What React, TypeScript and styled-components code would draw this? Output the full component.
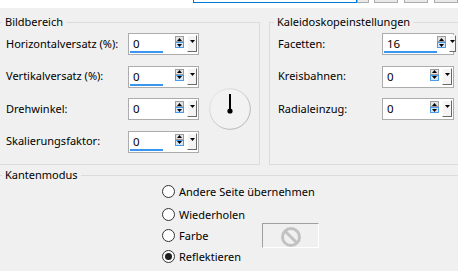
import React from 'react';
import styled, { createGlobalStyle } from 'styled-components';

const GlobalStyle = createGlobalStyle`
    html, body {
        margin: 0;
        padding: 0;
        background: #f0f0f0;
    }
    body {
        font-family: 'Noto Sans', 'Segoe UI', sans-serif;
        font-size: 11px;
        color: #000;
    }
`;

const Window = styled.div`
    width: 458px;
    height: 271px;
    overflow: hidden;
    background: #f0f0f0;
`;

const TopStrip = styled.div`
    height: 8px;
    background: #fff;
    display: flex;
    align-items: flex-start;
`;

const SearchField = styled.div`
    margin-left: 193px;
    width: 170px;
    height: 3px;
    box-sizing: border-box;
    border: 1px solid #0078d7;
    border-top: none;
    background: #fff;
`;

const StripButton = styled.div<{ $w: number; $gap: number }>`
    margin-left: ${(p) => p.$gap}px;
    width: ${(p) => p.$w}px;
    height: 3px;
    box-sizing: border-box;
    border: 1px solid #adadad;
    border-top: none;
    background: #e9e9e9;
    flex: none;
`;

const UpperRow = styled.div`
    display: flex;
    margin-top: 14px;
`;

const Group = styled.section<{ $w: number; $h: number; $open?: boolean }>`
    flex: none;
    width: ${(p) => p.$w}px;
    height: ${(p) => p.$h}px;
    box-sizing: border-box;
    border: 1px solid #dcdcdc;
    border-left: ${(p) => (p.$open ? 'none' : '1px solid #dcdcdc')};
    & + & {
        margin-left: 9px;
    }
`;

const EdgeGroup = styled.section`
    margin-top: 10px;
    border-top: 1px solid #dcdcdc;
`;

const Legend = styled.div<{ $x: number }>`
    width: fit-content;
    margin: -9px 0 0 ${(p) => p.$x}px;
    padding: 0 3px;
    line-height: 16px;
    background: #f0f0f0;
`;

const FieldGrid = styled.div<{ $label: number; $box: number; $pad: number }>`
    display: grid;
    grid-template-columns: ${(p) => p.$label}px ${(p) => p.$box}px auto;
    grid-auto-rows: 22px;
    row-gap: 10.67px;
    align-items: center;
    margin-top: 3px;
    padding-left: ${(p) => p.$pad}px;
`;

const Label = styled.div`
    grid-column: 1;
    margin-bottom: 2px;
    white-space: nowrap;
`;

const Box = styled.div`
    grid-column: 2;
    height: 22px;
    box-sizing: border-box;
    border: 1px solid #acacac;
    background: #fff;
    display: flex;
    align-items: flex-start;
`;

const ValueCell = styled.div`
    flex: 1;
    height: 100%;
    display: flex;
    flex-direction: column;
`;

const ValueText = styled.div`
    padding: 2px 0 0 4px;
    line-height: 15px;
    font-size: 11.5px;
`;

const Bar = styled.div`
    margin: auto 0 1px 1px;
    height: 3px;
    background: #3a95ef;
`;

const Spinner = styled.div`
    display: flex;
    flex-direction: column;
    margin-top: 2px;
`;

const Step = styled.div<{ $hot?: boolean }>`
    width: 9px;
    height: 6px;
    box-sizing: border-box;
    border: 1px solid ${(p) => (p.$hot ? '#4c9ae4' : '#9d9d9d')};
    background: ${(p) => (p.$hot ? '#d4e8fa' : '#e4e4e4')};
    display: flex;
    align-items: center;
    justify-content: center;
`;

const DropButton = styled.div`
    width: 10px;
    height: 17px;
    margin: 1px 1px 0 3px;
    box-sizing: border-box;
    border-top: 1px solid #fff;
    border-left: 1px solid #fff;
    border-right: 1px solid #6a6a6a;
    border-bottom: 1px solid #6a6a6a;
    background: #f4f4f4;
    display: flex;
    justify-content: center;
    padding-top: 4px;
`;

const Dial = styled.svg`
    grid-column: 3;
    grid-row: 3;
    margin-left: 10px;
    width: 42px;
    height: 42px;
    align-self: center;
`;

const RadioGrid = styled.div`
    display: grid;
    grid-template-columns: 100px auto;
    grid-template-rows: 24px 22px 21px 21px;
    align-items: center;
    margin: -4px 0 0 162px;
`;

const RadioRow = styled.label<{ $wide?: boolean }>`
    grid-column: ${(p) => (p.$wide ? '1 / -1' : '1')};
    display: flex;
    align-items: center;
    gap: 4px;
    white-space: nowrap;
`;

const RadioDot = styled.span<{ $on?: boolean }>`
    width: 13px;
    height: 13px;
    flex: none;
    box-sizing: border-box;
    border-radius: 50%;
    border: 1px solid #333;
    background: #fff;
    display: flex;
    align-items: center;
    justify-content: center;
    &::after {
        content: '';
        width: 7px;
        height: 7px;
        border-radius: 50%;
        background: ${(p) => (p.$on ? '#1f1f1f' : 'transparent')};
    }
`;

const Swatch = styled.div`
    grid-column: 2;
    grid-row: 3;
    width: 57px;
    height: 25px;
    box-sizing: border-box;
    border-top: 1px solid #a0a0a0;
    border-left: 1px solid #a0a0a0;
    border-right: 1px solid #fff;
    border-bottom: 1px solid #fff;
    display: flex;
    align-items: center;
    justify-content: center;
    padding: 2px 0 0 1px;
`;

const Arrow = ({ up }: { up?: boolean }) => (
    <svg width="5" height="3" viewBox="0 0 5 3">
        <polygon points={up ? '2.5,0 5,3 0,3' : '0,0 5,0 2.5,3'} fill="#000" />
    </svg>
);

type Field = { label: string; value: string; bar: number };

const imageFields: Field[] = [
    { label: 'Horizontalversatz (%):', value: '0', bar: 33 },
    { label: 'Vertikalversatz (%):', value: '0', bar: 33 },
    { label: 'Drehwinkel:', value: '0', bar: 0 },
    { label: 'Skalierungsfaktor:', value: '0', bar: 33 },
];

const kaleidoFields: Field[] = [
    { label: 'Facetten:', value: '16', bar: 53 },
    { label: 'Kreisbahnen:', value: '0', bar: 0 },
    { label: 'Radialeinzug:', value: '0', bar: 0 },
];

const edgeModes = ['Andere Seite übernehmen', 'Wiederholen', 'Farbe', 'Reflektieren'];

const SpinField = ({ field }: { field: Field }) => (
    <>
        <Label>{field.label}</Label>
        <Box>
            <ValueCell>
                <ValueText>{field.value}</ValueText>
                {field.bar > 0 && <Bar style={{ width: field.bar }} />}
            </ValueCell>
            <Spinner>
                <Step>
                    <Arrow up />
                </Step>
                <Step $hot>
                    <Arrow />
                </Step>
            </Spinner>
            <DropButton>
                <Arrow />
            </DropButton>
        </Box>
    </>
);

const App = () => (
    <Window>
        <GlobalStyle />
        <TopStrip>
            <SearchField />
            <StripButton $w={12} $gap={0} />
            <StripButton $w={24} $gap={5} />
            <StripButton $w={24} $gap={6} />
            <StripButton $w={24} $gap={6} />
        </TopStrip>
        <UpperRow>
            <Group $w={260} $h={143} $open>
                <Legend $x={2}>Bildbereich</Legend>
                <FieldGrid $label={122} $box={71} $pad={6}>
                    {imageFields.map((f) => (
                        <SpinField key={f.label} field={f} />
                    ))}
                    <Dial viewBox="0 0 42 42">
                        <defs>
                            <linearGradient id="ring" x1="0" y1="0" x2="1" y2="1">
                                <stop offset="0" stopColor="#ececec" />
                                <stop offset="1" stopColor="#a8a8a8" />
                            </linearGradient>
                        </defs>
                        <circle cx="21" cy="21" r="20.3" fill="#f2f2f2" stroke="url(#ring)" strokeWidth="1" />
                        <line x1="21" y1="6" x2="21" y2="23" stroke="#000" strokeWidth="2" />
                        <circle cx="21" cy="23" r="2.6" fill="#000" />
                    </Dial>
                </FieldGrid>
            </Group>
            <Group $w={200} $h={143}>
                <Legend $x={4}>Kaleidoskopeinstellungen</Legend>
                <FieldGrid $label={104} $box={72} $pad={8}>
                    {kaleidoFields.map((f) => (
                        <SpinField key={f.label} field={f} />
                    ))}
                </FieldGrid>
            </Group>
        </UpperRow>
        <EdgeGroup>
            <Legend $x={2}>Kantenmodus</Legend>
            <RadioGrid>
                {edgeModes.map((mode, i) => (
                    <RadioRow key={mode} $wide={i < 2}>
                        <RadioDot $on={mode === 'Reflektieren'} />
                        {mode}
                    </RadioRow>
                ))}
                <Swatch>
                    <svg width="22" height="22" viewBox="0 0 22 22">
                        <circle cx="11" cy="11" r="8.5" fill="none" stroke="#c2c2c2" strokeWidth="3" />
                        <line x1="5" y1="5" x2="17" y2="17" stroke="#c2c2c2" strokeWidth="3" />
                    </svg>
                </Swatch>
            </RadioGrid>
        </EdgeGroup>
    </Window>
);

export default App;
